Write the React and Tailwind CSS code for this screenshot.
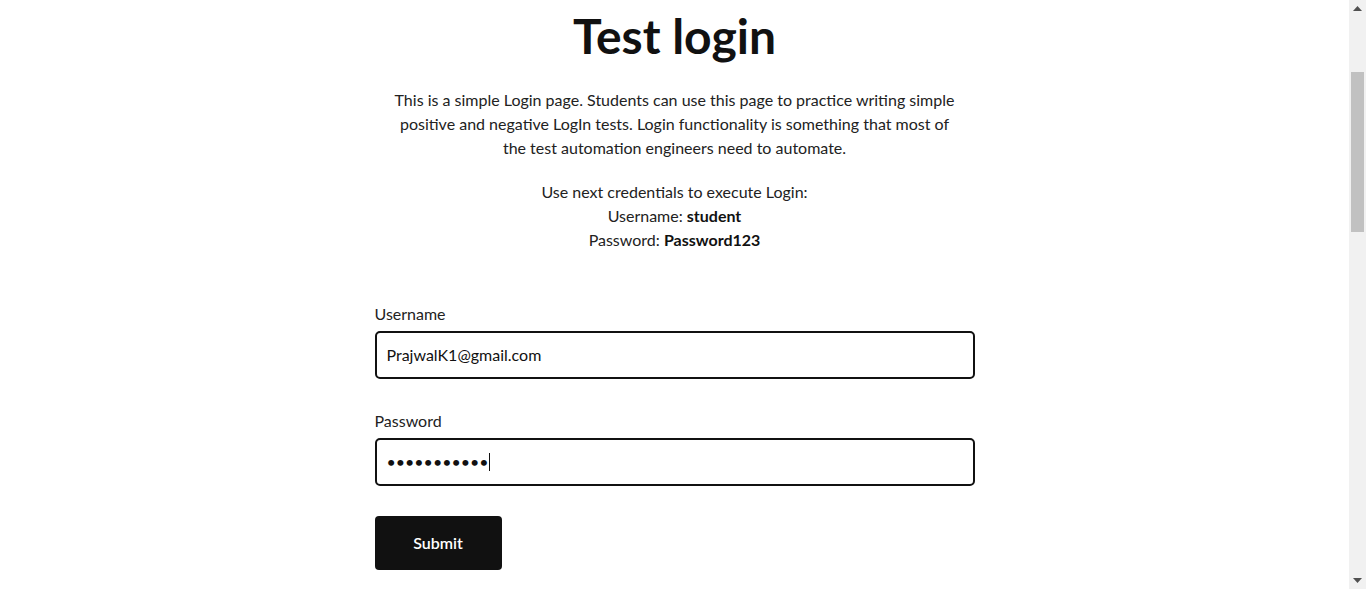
import React from 'react'

// Login practice page, scrolled a few pixels down, with the browser's
// classic scrollbar drawn along the right edge.
const Scrollbar = () => (
  <div className="flex h-[589px] w-[17px] shrink-0 flex-col bg-[#f1f1f1]">
    <div className="flex h-[17px] items-center justify-center">
      <svg width="9" height="5" viewBox="0 0 9 5" aria-hidden="true">
        <path d="M0 5 L4.5 0 L9 5 Z" fill="#505050" />
      </svg>
    </div>
    <div className="flex-1 px-[2px] pt-[55px]">
      <div className="h-[160px] w-full bg-[#c1c1c1]" />
    </div>
    <div className="flex h-[17px] items-center justify-center">
      <svg width="9" height="5" viewBox="0 0 9 5" aria-hidden="true">
        <path d="M0 0 L4.5 5 L9 0 Z" fill="#505050" />
      </svg>
    </div>
  </div>
)

const Field = ({ label, children, className = '' }) => (
  <div className={className}>
    <p className="text-base leading-6 text-[#222]">{label}</p>
    <div className="mt-[5px] flex h-[48px] items-center rounded-[5px] border-2 border-[#111] px-[10px] text-base text-[#111]">
      {children}
    </div>
  </div>
)

export default function App() {
  return (
    <div className="flex h-[589px] w-full overflow-hidden bg-white font-['Lato','Liberation_Sans',sans-serif]">
      <main className="flex flex-1 flex-col items-center pt-[7px]">
        <h1 className="text-5xl leading-[1.2] font-bold text-[#111]">Test login</h1>

        <div className="flex w-[600px] flex-col items-center text-center text-base leading-6 text-[#222]">
          <p className="mt-[23px] w-[566px]">
            This is a simple Login page. Students can use this page to practice writing simple positive and negative
            LogIn tests. Login functionality is something that most of the test automation engineers need to automate.
          </p>
          <p className="mt-[20px]">
            Use next credentials to execute Login:
            <br />
            Username: <b className="font-bold text-[#111]">student</b>
            <br />
            Password: <b className="font-bold text-[#111]">Password123</b>
          </p>
        </div>

        <form className="mt-[50px] w-[600px]" onSubmit={(e) => e.preventDefault()}>
          <Field label="Username">PrajwalK1@gmail.com</Field>
          <Field label="Password" className="mt-[30px]">
            <span>•••••••••••</span>
            <span className="h-[18px] w-px bg-[#111]" />
          </Field>
          <button
            type="submit"
            className="mt-[30px] h-[54px] w-[127px] rounded-[4px] bg-[#111] text-base font-semibold text-white"
          >
            Submit
          </button>
        </form>
      </main>
      <Scrollbar />
    </div>
  )
}
